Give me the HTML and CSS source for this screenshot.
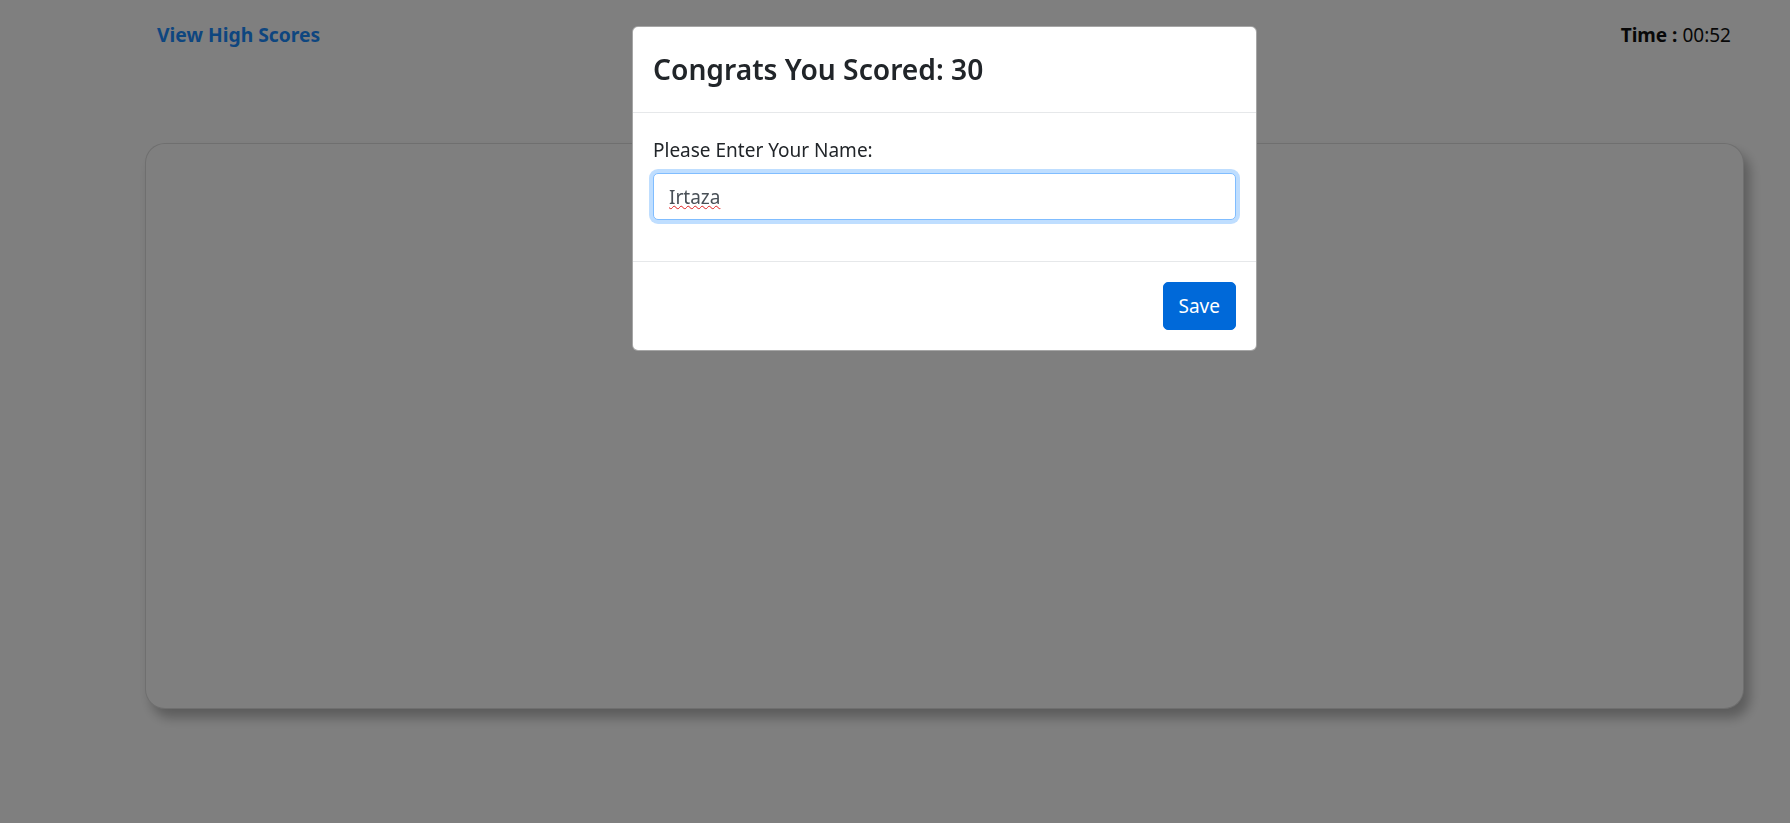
FILE: index.html
```html
<!DOCTYPE html>
<html lang="en">
<head>
<meta charset="utf-8">
<title>Quiz</title>
<link rel="stylesheet" href="styles.css">
</head>
<body>
<div class="page">
  <header class="topbar">
    <a class="scores-link" href="#">View High Scores</a>
    <div class="timer"><strong>Time :</strong> <span>00:52</span></div>
  </header>
  <main class="quiz-card"></main>
</div>

<div class="backdrop"></div>

<div class="modal" role="dialog" aria-modal="true">
  <div class="modal-header">
    <h4 class="modal-title">Congrats You Scored: 30</h4>
  </div>
  <div class="modal-body">
    <div class="form-group">
      <label class="form-label" for="name">Please Enter Your Name:</label>
      <input class="form-control" id="name" type="text" value="Irtaza">
    </div>
  </div>
  <div class="modal-footer">
    <button class="btn-save" type="button">Save</button>
  </div>
</div>
</body>
</html>
```

FILE: styles.css
```css
* { box-sizing: border-box; }

html, body {
  margin: 0;
  padding: 0;
  height: 100%;
  background: #ffffff;
  overflow: hidden;
}

body {
  font-family: "Noto Sans", "Open Sans", sans-serif;
  font-size: 20px;
  line-height: 30px;
  color: #212529;
}

.page {
  padding: 20px 46px 0 145px;
}

.topbar {
  display: flex;
  justify-content: space-between;
  align-items: center;
  height: 30px;
  padding: 0 13px 0 12px;
}

.scores-link {
  color: #1c8cff;
  font-weight: 700;
  text-decoration: none;
  font-size: 19.3px;
}

.timer {
  color: #111;
  font-size: 19px;
}

.timer strong { font-weight: 700; }

.quiz-card {
  margin-top: 93px;
  height: 566px;
  border: 1px solid rgba(0, 0, 0, 0.13);
  border-radius: 20px;
  background: #fff;
  box-shadow: 6px 9px 12px rgba(0, 0, 0, 0.28);
}

.backdrop {
  position: fixed;
  inset: 0;
  background: rgba(0, 0, 0, 0.5);
}

.modal {
  position: fixed;
  top: 26px;
  left: 632px;
  width: 625px;
  background: #fff;
  border: 1px solid rgba(0, 0, 0, 0.35);
  border-radius: 6px;
}

.modal-header {
  padding: 20px;
  border-bottom: 1px solid #e6e8ea;
}

.modal-title {
  margin: 0;
  font-size: 28.2px;
  line-height: 45px;
  font-weight: 600;
  color: #212529;
}

.modal-body {
  padding: 22px 20px 20px;
}

.form-group {
  margin-bottom: 21px;
}

.form-label {
  display: block;
  margin-bottom: 8px;
  font-size: 19px;
}

.form-control {
  display: block;
  width: 100%;
  height: 47px;
  padding: 7px 15px;
  font-family: inherit;
  font-size: 19px;
  line-height: 30px;
  color: #495057;
  background: #fff;
  border: 1px solid #80bdff;
  border-radius: 5px;
  outline: none;
  box-shadow: 0 0 0 4px rgba(0, 123, 255, 0.25);
  text-decoration: underline wavy #e02020;
  text-decoration-thickness: 1px;
  text-underline-offset: 1px;
}

.modal-footer {
  display: flex;
  justify-content: flex-end;
  padding: 15px;
  border-top: 1px solid #e6e8ea;
}

.btn-save {
  margin: 5px;
  height: 47.5px;
  padding: 7px 15px;
  font-family: inherit;
  font-size: 19px;
  line-height: 30px;
  color: #fff;
  background: #0069d9;
  border: 1px solid #0069d9;
  border-radius: 5px;
}
```
